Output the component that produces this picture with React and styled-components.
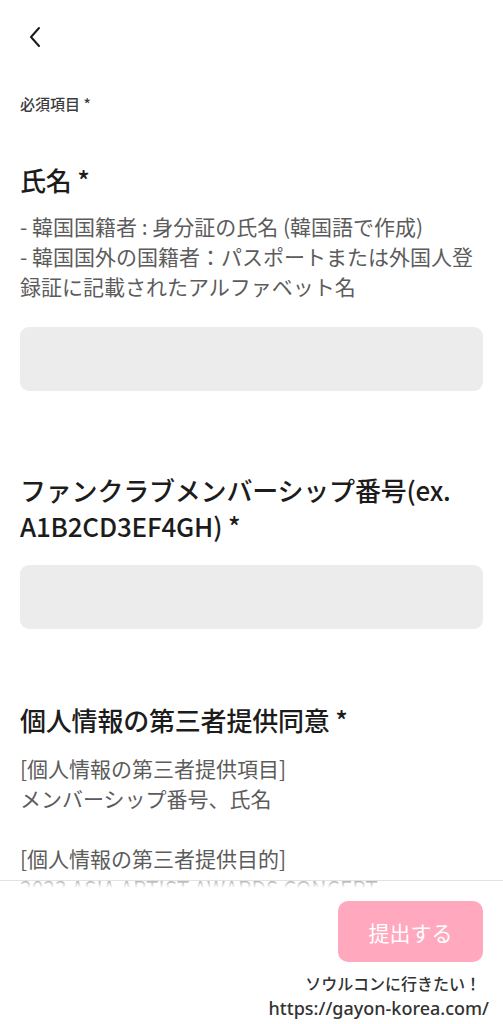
import React from "react";
import styled, { createGlobalStyle } from "styled-components";

const GlobalStyle = createGlobalStyle`
  * { box-sizing: border-box; }
  html, body {
    margin: 0;
    padding: 0;
    background: #ffffff;
    font-family: "Noto Sans CJK JP", "Noto Sans", sans-serif;
  }
`;

const Page = styled.div`
  position: relative;
  width: 503px;
  height: 1024px;
  overflow: hidden;
  background: #ffffff;
`;

const Scroll = styled.div`
  height: 1024px;
  overflow: hidden;
`;

const Header = styled.div`
  height: 74px;
  display: flex;
  align-items: center;
  padding: 0 0 0 24px;
`;

const BackButton = styled.button`
  border: 0;
  background: none;
  padding: 0;
  width: 22px;
  height: 22px;
  display: flex;
  align-items: center;
  justify-content: center;
  cursor: pointer;
`;

const Body = styled.div`
  padding: 0 20px;
  display: flex;
  flex-direction: column;
`;

const Required = styled.div`
  margin-top: 19px;
  font-size: 15px;
  line-height: 22px;
  color: #3c3c3c;
  font-weight: 500;
`;

const Section = styled.section`
  margin-top: ${(p) => p.$top}px;
  display: flex;
  flex-direction: column;
`;

const Title = styled.h2`
  margin: 0;
  font-size: 26px;
  line-height: 36px;
  font-weight: 500;
  color: #1c1c1c;
  letter-spacing: -0.2px;
`;

const Desc = styled.p`
  margin: ${(p) => p.$gap}px 0 0;
  font-size: 21px;
  line-height: 30px;
  color: #5c5c5c;
  white-space: pre-line;
`;

const Field = styled.input`
  margin-top: ${(p) => p.$gap}px;
  width: 100%;
  height: 64px;
  flex-shrink: 0;
  border: 0;
  border-radius: 9px;
  background: #ececec;
  outline: none;
  padding: 0 16px;
  font-size: 20px;
  font-family: inherit;
`;

/* sticky bottom bar that lies over the scrolled form */
const Footer = styled.div`
  position: absolute;
  left: 0;
  right: 0;
  bottom: 0;
  height: 144px;
  border-top: 1px solid #e2e2e2;
  background: linear-gradient(
    to bottom,
    rgba(255, 255, 255, 0.55) 0px,
    #ffffff 7px
  );
  display: flex;
  justify-content: flex-end;
  align-items: flex-start;
  padding: 20px 20px 0;
`;

const Submit = styled.button`
  width: 145px;
  height: 61px;
  border: 0;
  border-radius: 10px;
  background: #ffa8be;
  color: #ffffff;
  font-family: inherit;
  font-size: 21px;
  font-weight: 400;
  cursor: pointer;
`;

const Watermark = styled.div`
  position: absolute;
  right: 14px;
  bottom: 4px;
  text-align: right;
  color: #333333;
  font-family: "Noto Sans", "Noto Sans CJK JP", sans-serif;
  line-height: 24px;
  font-weight: 500;
`;

const WmLine = styled.div`
  font-size: ${(p) => p.$size}px;
  padding-right: ${(p) => p.$pad || 0}px;
`;

export default function App() {
  return (
    <Page>
      <GlobalStyle />
      <Scroll>
        <Header>
          <BackButton aria-label="戻る">
            <svg width="14" height="22" viewBox="0 0 14 22" fill="none">
              <path d="M11 2 L3 11 L11 20" stroke="#1a1a1a" strokeWidth="2" strokeLinecap="round" strokeLinejoin="round" />
            </svg>
          </BackButton>
        </Header>
        <Body>
          <Required>必須項目 *</Required>

          <Section $top={47}>
            <Title>氏名 *</Title>
            <Desc $gap={13}>
              {"- 韓国国籍者 : 身分証の氏名 (韓国語で作成)\n- 韓国国外の国籍者：パスポートまたは外国人登録証に記載されたアルファベット名"}
            </Desc>
            <Field $gap={26} />
          </Section>

          <Section $top={81}>
            <Title>ファンクラブメンバーシップ番号(ex. A1B2CD3EF4GH) *</Title>
            <Field $gap={21} />
          </Section>

          <Section $top={73}>
            <Title>個人情報の第三者提供同意 *</Title>
            <Desc $gap={15}>
              {"[個人情報の第三者提供項目]\nメンバーシップ番号、氏名\n\n[個人情報の第三者提供目的]\n2023 ASIA ARTIST AWARDS CONCERT"}
            </Desc>
          </Section>
        </Body>
      </Scroll>
      <Footer>
        <Submit>提出する</Submit>
      </Footer>
      <Watermark>
        <WmLine $size={16} $pad={8}>ソウルコンに行きたい！</WmLine>
        <WmLine $size={18}>https://gayon-korea.com/</WmLine>
      </Watermark>
    </Page>
  );
}
